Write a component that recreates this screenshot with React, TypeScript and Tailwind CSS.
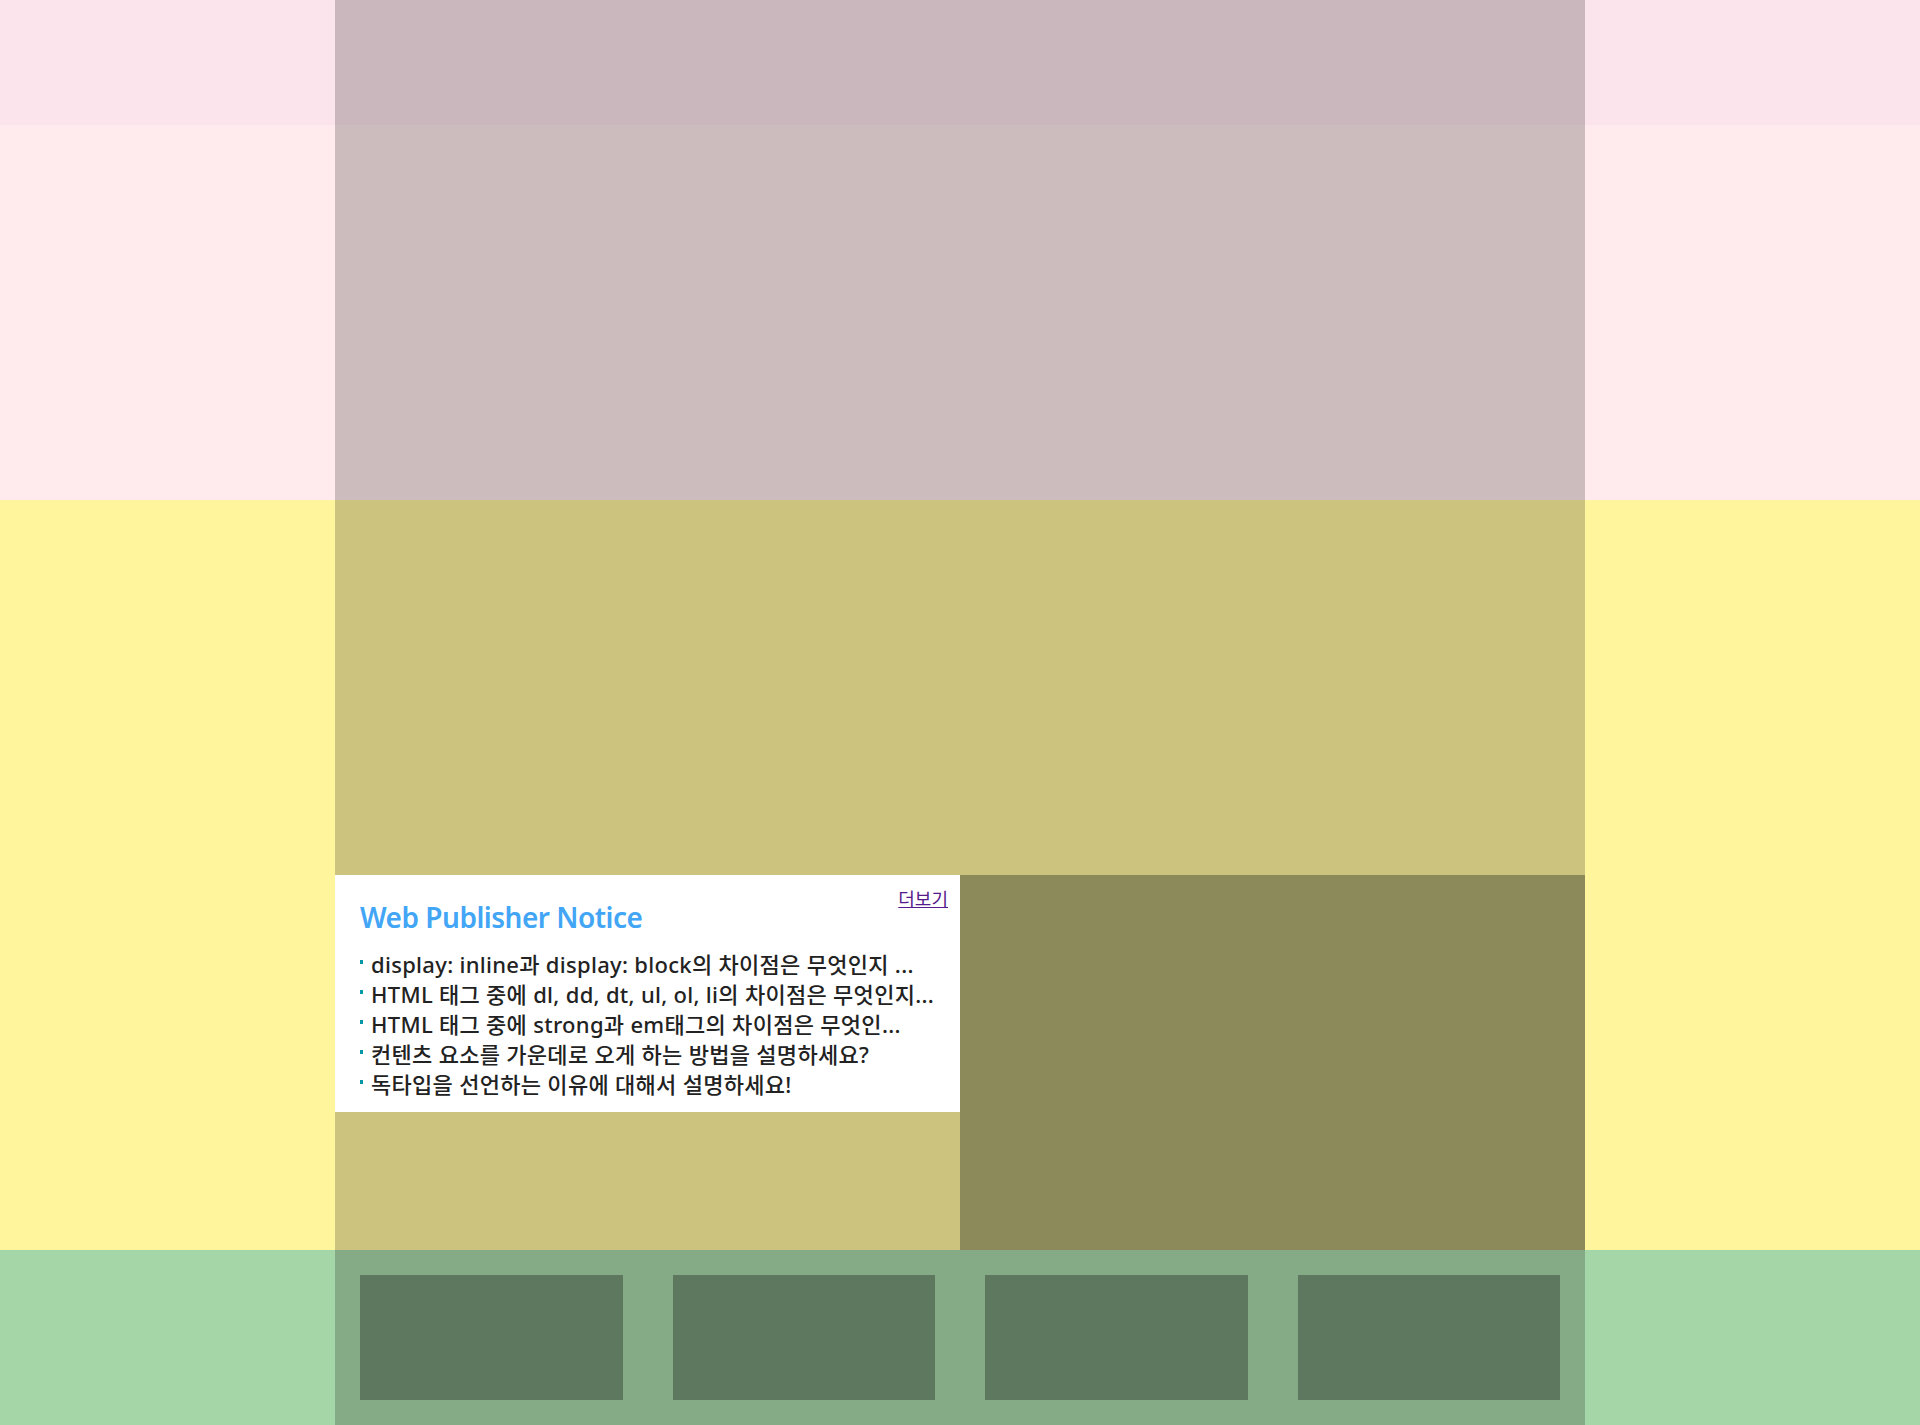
import React from 'react';

const notices = [
    'display: inline과 display: block의 차이점은 무엇인지 ...',
    'HTML 태그 중에 dl, dd, dt, ul, ol, li의 차이점은 무엇인지...',
    'HTML 태그 중에 strong과 em태그의 차이점은 무엇인...',
    '컨텐츠 요소를 가운데로 오게 하는 방법을 설명하세요?',
    '독타입을 선언하는 이유에 대해서 설명하세요!',
];

const Notice: React.FC = () => (
    <div className="relative bg-white h-[237px] px-[25px] pt-[24px]">
        <a href="#" className="absolute right-[12px] top-[12px] text-[18px] leading-[24px] text-[#551a8b] underline">
            더보기
        </a>
        <h3 className="text-[28px] leading-[36px] font-semibold text-[#42a5f5] tracking-[-0.5px]">
            Web Publisher Notice
        </h3>
        <ul className="mt-[14px]">
            {notices.map((text) => (
                <li key={text} className="flex items-start whitespace-nowrap text-[22px] leading-[30px] font-medium tracking-[0.3px] text-[#222]">
                    <span className="w-[3px] h-[4px] bg-[#0097a7] mt-[11px] mr-[8px] shrink-0" />
                    {text}
                </li>
            ))}
        </ul>
    </div>
);

export default function App() {
    return (
        <div className="w-full min-w-[1250px]" style={{ fontFamily: '"Noto Sans", "Noto Sans CJK KR", sans-serif' }}>
            {/* header */}
            <div className="bg-[#fce4ec]">
                <div className="w-[1250px] h-[125px] mx-auto bg-[#cab6bd]" />
            </div>

            {/* banner */}
            <div className="bg-[#ffebee]">
                <div className="w-[1250px] h-[375px] mx-auto bg-[#ccbcbe]" />
            </div>

            {/* contents */}
            <div className="bg-[#fff59d]">
                <div className="w-[1250px] h-[750px] mx-auto bg-[#ccc47e] flex flex-col">
                    <div className="h-[375px]" />
                    <div className="flex h-[375px]">
                        <div className="w-1/2">
                            <Notice />
                        </div>
                        <div className="w-1/2 bg-[#8c895a]" />
                    </div>
                </div>
            </div>

            {/* footer */}
            <div className="bg-[#a5d6a7]">
                <div className="w-[1250px] mx-auto bg-[#84ab86] flex">
                    {[1, 2, 3, 4].map((n) => (
                        <div key={n} className="flex-1 p-[25px]">
                            <div className="h-[125px] bg-[#5d785f]" />
                        </div>
                    ))}
                </div>
            </div>
        </div>
    );
}
